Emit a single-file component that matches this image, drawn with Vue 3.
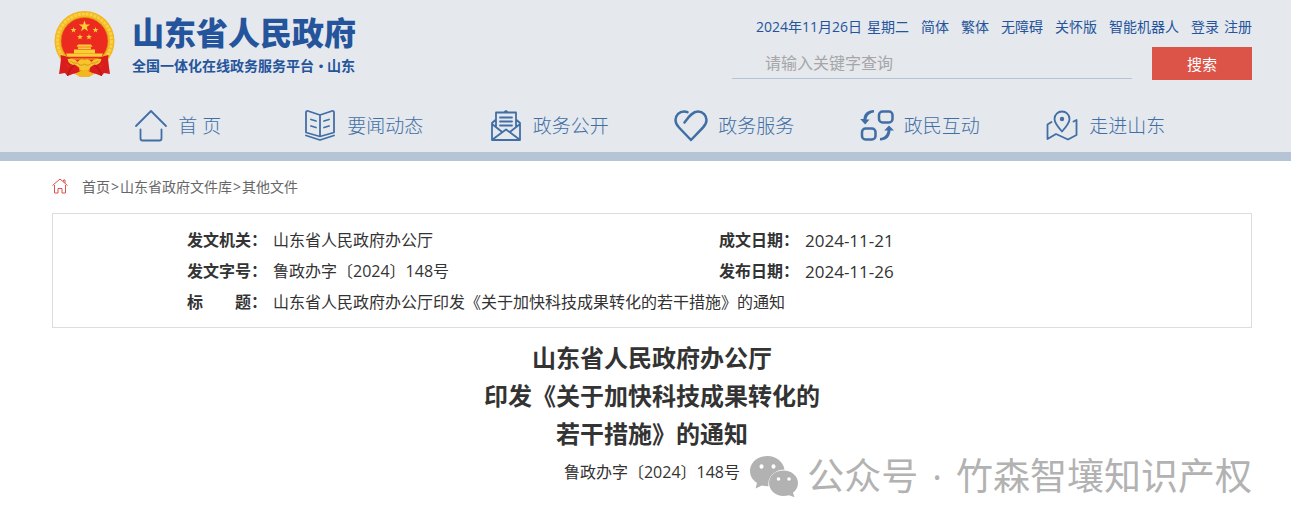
<script setup>
import { ref } from 'vue'

const keyword = ref('')

const topLinks = ['简体', '繁体', '无障碍', '关怀版', '智能机器人']

const nav = [
    { icon: 'home', text: '首 页' },
    { icon: 'book', text: '要闻动态' },
    { icon: 'mail', text: '政务公开' },
    { icon: 'heart', text: '政务服务' },
    { icon: 'swap', text: '政民互动' },
    { icon: 'map', text: '走进山东' }
]

const crumbs = ['首页', '山东省政府文件库', '其他文件']

// small stars of the emblem
const stars = [[21, 20], [43, 20], [27.5, 27], [36.5, 27]]
</script>

<template>
    <div class="page">
        <header class="header">
            <div class="top">
                <a class="logo" href="#">
                    <svg class="emblem" viewBox="0 0 64 68" aria-hidden="true">
                        <path d="M9 42Q8 55 6.500 64l6-1 2.500 3 8-3 5 4h8l5-4 8 3 2.500-3 6 1Q56 55 55 42z" fill="#d91c1c"/>
                        <circle cx="32" cy="31" r="30" fill="#f2b71f"/>
                        <circle cx="32" cy="31" r="27" fill="none" stroke="#f9d048" stroke-width="3" stroke-dasharray="3 1"/>
                        <circle cx="32" cy="31" r="23.500" fill="#ed2a20" stroke="#d98a14" stroke-width=".6"/>
                        <g fill="#f9cf35">
                            <path d="M32 10.500l1.400 4h4.200l-3.400 2.600 1.300 4.100-3.500-2.500-3.500 2.500 1.300-4.100-3.400-2.600h4.200z"/>
                            <path v-for="s in stars" :key="s[0]" :transform="`translate(${s[0]} ${s[1]})`" d="M0-3l.7 2h2.200L1.200.4l.6 2.200L0 1.300l-1.800 1.300.6-2.200L-2.900-1h2.200z"/>
                            <path d="M25.500 34.500h13l1.500 2.200H24zM25.500 37.200h13v1.800h-13zM21.500 39.500h21v4h-21z"/>
                            <path d="M13.500 43.500h37l-1.500 3.200H15z"/>
                        </g>
                        <path d="M16.500 49h31" stroke="#f2b71f" stroke-width="1"/>
                        <path d="M8 45q9 1 15 8 4 3 4 7l-5 4q-3-8-13-11zM56 45q-9 1-15 8-4 3-4 7l5 4q3-8 13-11z" fill="#d91c1c"/>
                        <path d="M15 49q7-1 10 3 3-4 7-2 4-2 7 2 3-4 10-3-1 6-8 6l-4 3q-1 3-5 3t-5-3l-4-3q-7 0-8-6z" fill="#f6c42d"/>
                        <path d="M25 53q3 4 7 1 4 3 7-1M18 51q3 3 7 2M46 51q-3 3-7 2" fill="none" stroke="#d08a18" stroke-width=".8"/>
                        <path d="M26 62q6-4 12 0l4 2-6 3h-8l-6-3z" fill="#f2b71f"/>
                        <path d="M15 66q2-8 7-11M49 66q-2-8-7-11" fill="none" stroke="#a81414" stroke-width="1"/>
                    </svg>
                    <span class="names">
                        <strong class="name">山东省人民政府</strong>
                        <span class="slogan">全国一体化在线政务服务平台<i>·</i>山东</span>
                    </span>
                </a>
                <div class="tools">
                    <div class="links">
                        <span class="pair"><span>2024年11月26日</span><span>星期二</span></span>
                        <a v-for="l in topLinks" :key="l" href="#">{{ l }}</a>
                        <span class="pair"><a href="#">登录</a><a href="#">注册</a></span>
                    </div>
                    <form class="search" @submit.prevent>
                        <input v-model="keyword" type="text" class="keyword" aria-label="请输入关键字查询" placeholder="请输入关键字查询"/>
                        <button class="submit" type="submit">搜索</button>
                    </form>
                </div>
            </div>
            <nav class="nav">
                <a v-for="n in nav" :key="n.icon" class="navItem" href="#">
                    <svg class="navIcon" viewBox="0 0 34 34" aria-hidden="true">
                        <g v-if="n.icon == 'home'">
                            <path d="M2 18 17 3l15 15M6.500 21.500v9q0 2 2 2h17q2 0 2-2v-9"/>
                        </g>
                        <g v-else-if="n.icon == 'book'">
                            <path d="M17 7 5 3q-2-.5-2 1.500V24.500L17 28.500 31 24.500V4.500Q31 2.500 29 3zM17 7v21M3 27.500 17 32l14-4.500M8 11.500l5 1.500M8 18l5 1.500M26 11.500 21 13M26 18l-5 1.500"/>
                        </g>
                        <g v-else-if="n.icon == 'mail'">
                            <path d="M7 19V4.500h20V19M7 11.500 3 15v17h28V15l-4-3.500M3 16l9.500 7.500M31 16l-9.500 7.500M3.500 31.500 17 21.500l13.500 10M11 9.500h12M11 13.500h12M11 17.500h12M15.500 4 17 3l1.500 1"/>
                        </g>
                        <g v-else-if="n.icon == 'heart'">
                            <path class="bold" d="M10.500 14.500C14 10 18 3.500 24 3.500c5 0 8.500 4 8.500 8.500 0 3-1.500 5.500-3.500 7.500L17 32 5 19.500C3 17.500 1.500 15 1.500 12 1.500 7 5.500 3.500 10 3.500q2 0 3.500.7"/>
                        </g>
                        <g v-else-if="n.icon == 'swap'">
                            <rect class="bold" x="19" y="3.500" width="13.500" height="11" rx="3.500"/>
                            <rect class="bold" x="2" y="20.500" width="13.500" height="11" rx="3.500"/>
                            <path class="fill" d="M14 2C7.500 2 3.800 5.500 3.500 11H.2L5.200 16.500 9.500 11.500H6.500C7 7.500 9.500 5 14 4.500zM20 32.500c6.500 0 10-3.500 10.500-10H34L29 17.500l-4.800 5h3.300c-.3 4-3 7-7.500 7.500z"/>
                        </g>
                        <g v-else>
                            <path d="M6.500 14 2.500 16.500V31L11 26l12 5.500L31.500 27V12l-3 1.500M17 23.500C12.500 18.500 9.500 15 9.500 11a7.500 7.500 0 0 1 15 0c0 4-3 7.500-7.500 12.500z"/>
                            <circle class="fill" cx="17" cy="11" r="2.200"/>
                        </g>
                    </svg>
                    <span>{{ n.text }}</span>
                </a>
            </nav>
        </header>

        <main class="main">
            <div class="crumbs">
                <svg class="crumbIcon" viewBox="0 0 16 16" aria-hidden="true">
                    <path d="M.5 7.500 8 1l7.500 6.500M11.500 3.500V2H13v3M2.500 7v8h3.500v-4.500h4V15h3.500V7"/>
                </svg>
                <template v-for="(c, i) in crumbs" :key="c">
                    <span v-if="i > 0" class="arrow">&gt;</span>
                    <a href="#">{{ c }}</a>
                </template>
            </div>

            <div class="info">
                <table class="infoTable">
                    <tbody>
                        <tr>
                            <th scope="row">发文机关：</th>
                            <td>山东省人民政府办公厅</td>
                            <th scope="row">成文日期：</th>
                            <td class="day">2024-11-21</td>
                        </tr>
                        <tr>
                            <th scope="row">发文字号：</th>
                            <td>鲁政办字〔2024〕148号</td>
                            <th scope="row">发布日期：</th>
                            <td class="day">2024-11-26</td>
                        </tr>
                        <tr>
                            <th scope="row">标　　题：</th>
                            <td colspan="3">山东省人民政府办公厅印发《关于加快科技成果转化的若干措施》的通知</td>
                        </tr>
                    </tbody>
                </table>
            </div>

            <h1 class="title">山东省人民政府办公厅<br/>印发《关于加快科技成果转化的<br/>若干措施》的通知</h1>
            <p class="number">鲁政办字〔2024〕148号</p>
        </main>

        <div class="watermark">
            <svg class="wechat" viewBox="0 0 50 42" aria-hidden="true">
                <path d="M18.500 1C8.500 1 1 7.500 1 16c0 5 2.500 9 7 12l-1.500 5.500L13 30.500q3 .8 6.500.7C18 22 26 14.500 35.500 14.500 34 6.500 27 1 18.500 1z"/>
                <path d="M34.500 15.500C26 15.500 20 21 20 28s6.500 13 14.500 13q3 0 5.500-.8l5.500 2-1.500-4.500c3-2.500 5-5.500 5-9.700 0-7-6.500-12.500-14.500-12.500z"/>
                <g class="eyes">
                    <ellipse cx="12.500" cy="11.500" rx="2" ry="2.300"/>
                    <ellipse cx="24.500" cy="11.500" rx="2" ry="2.300"/>
                    <circle cx="29.500" cy="24" r="1.800"/>
                    <circle cx="40" cy="24" r="1.800"/>
                </g>
            </svg>
            <span class="account">
                <span>公众号</span>
                <span>·</span>
                <span>竹森智壤知识产权</span>
            </span>
        </div>
    </div>
</template>

<style>
body {
    margin: 0;
    background: #fff;
}
</style>

<style scoped>
.page {
    position: relative;
    font-family: "Open Sans", "Noto Sans CJK SC", sans-serif;
    color: #333;
    padding-bottom: 40px;
}

a {
    color: inherit;
    text-decoration: none;
}

.header {
    background: #e5e8ed;
    border-bottom: 9px solid #b6c5d6;
    padding: 0 39px 0 52px;
}

.top {
    display: flex;
    justify-content: space-between;
    height: 98px;
}

.logo {
    display: flex;
    align-items: flex-start;
    gap: 15px;
    padding-top: 10px;
    color: #24549b;
}

.emblem {
    width: 65px;
    height: 68px;
}

.names {
    display: flex;
    flex-direction: column;
    font-family: "Noto Sans CJK SC", sans-serif;
}

.name {
    font-size: 32px;
    line-height: 42px;
    font-weight: 900;
}

.slogan {
    display: flex;
    font-size: 14px;
    line-height: 26px;
    font-weight: 700;
}

.slogan i {
    width: 13px;
    text-align: center;
    font-style: normal;
}

.tools {
    padding-top: 16px;
}

.links {
    display: flex;
    justify-content: flex-end;
    gap: 12px;
    color: #24549b;
    font-size: 14px;
    line-height: 22px;
}

.pair {
    display: flex;
    gap: 5px;
}

.search {
    display: flex;
    align-items: flex-start;
    gap: 20px;
    margin-top: 9px;
}

.keyword {
    box-sizing: border-box;
    width: 400px;
    height: 32px;
    padding: 0 0 0 33px;
    border: 0;
    border-bottom: 1px solid #b6c5d6;
    background: none;
    font-family: inherit;
    font-size: 16px;
    outline: none;
}

.keyword::placeholder {
    color: #a6a6a6;
}

.submit {
    width: 100px;
    height: 33px;
    border: 0;
    background: #dc5447;
    color: #fff;
    font-family: inherit;
    font-size: 15px;
}

.nav {
    display: grid;
    grid-template-columns: repeat(6, 1fr);
    height: 54px;
    padding: 0 54px 0 33px;
}

.navItem {
    display: flex;
    justify-content: center;
    align-items: center;
    gap: 10px;
    color: #416fa5;
    font-size: 19px;
    font-weight: 300;
}

.navIcon {
    width: 34px;
    height: 34px;
    fill: none;
    stroke: currentColor;
    stroke-width: 1.8;
    stroke-linecap: round;
    stroke-linejoin: round;
}

.bold {
    stroke-width: 2.5;
}

.fill {
    fill: currentColor;
    stroke: none;
}

.main {
    padding: 0 39px 0 52px;
}

.crumbs {
    display: flex;
    align-items: center;
    height: 50px;
    padding-bottom: 2px;
    color: #666;
    font-size: 14px;
}

.crumbIcon {
    width: 16px;
    height: 16px;
    margin-right: 14px;
    fill: none;
    stroke: #d9534f;
    stroke-width: 1;
}

.arrow {
    padding: 0 1px;
}

.info {
    border: 1px solid #ddd;
    padding: 11px 0 9px 134px;
}

.infoTable {
    width: 100%;
    table-layout: fixed;
    border-collapse: collapse;
    font-size: 16px;
    line-height: 31px;
}

.infoTable th {
    width: 86px;
    padding: 0;
    text-align: left;
    font-weight: 700;
}

.infoTable td {
    padding: 0;
}

.infoTable .day {
    font-size: 17px;
}

.title {
    margin: 11px 0 0;
    font-size: 24px;
    line-height: 38px;
    font-weight: 700;
    text-align: center;
}

.number {
    margin: 7px 0 0;
    font-size: 16px;
    line-height: 24px;
    text-align: center;
}

.watermark {
    position: absolute;
    right: 39px;
    bottom: 26px;
    display: flex;
    align-items: center;
    gap: 8px;
    color: #b2b2b2;
    font-size: 37px;
    line-height: 44px;
}

.account {
    display: flex;
    gap: 14px;
}

.wechat {
    width: 50px;
    height: 42px;
    fill: #b2b2b2;
    overflow: visible;
}

.eyes {
    fill: #fff;
}
</style>
